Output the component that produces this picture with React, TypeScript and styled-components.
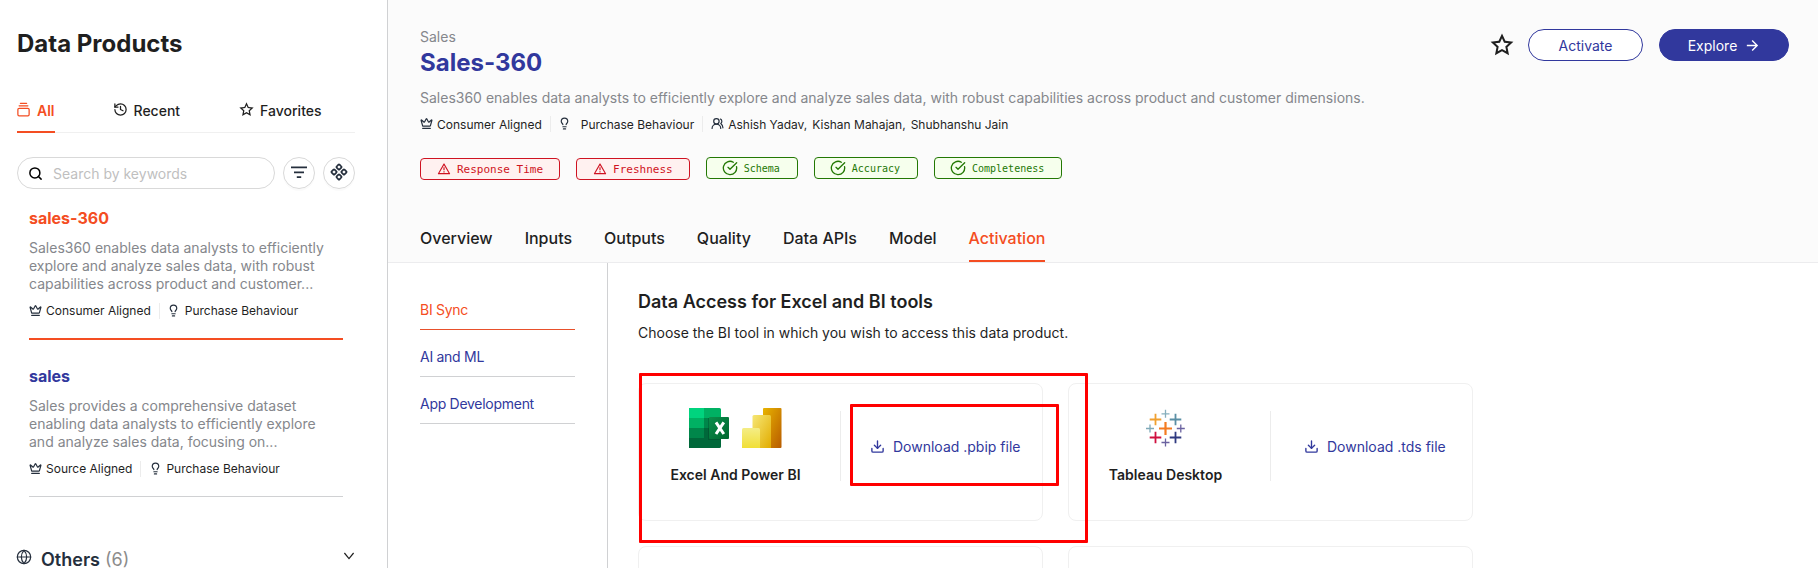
import React from "react";
import styled, { createGlobalStyle, css } from "styled-components";
import { RiAlertLine, RiStarLine, RiArrowRightLine } from "react-icons/ri";
import {
  CircleCheckBig, Component, Crown, Download, GalleryVerticalEnd,
  Globe, History, Lightbulb, Search, UsersRound,
} from "lucide-react";

const ORANGE = "#f44d22";
const BLUE = "#31389d";
const INK = "#1f1f1f";
const MUTED = "#85878c";
const RULE = "#d0d1d3";

const GlobalStyle = createGlobalStyle`
  * { box-sizing: border-box; }
  html, body { margin: 0; padding: 0; overflow: hidden; }
  body { font-family: Inter, "Liberation Sans", sans-serif; font-size: 14px; color: ${INK}; background: #fff; }
  h1, h2, h3, p { margin: 0; }
  svg { display: block; flex: none; }
`;

const Page = styled.div`
  display: flex;
  width: 1818px;
  height: 568px;
  overflow: hidden;
`;

const Sidebar = styled.aside`
  flex: none;
  width: 388px;
  border-right: 1px solid ${RULE};
  padding: 28px 32px 0 17px;
`;

const SidebarTitle = styled.h1`
  font-size: 24px;
  font-weight: 700;
  line-height: 32px;
`;

const FilterTabs = styled.nav`
  display: flex;
  gap: 59px;
  height: 43px;
  margin-top: 30px;
  border-bottom: 1px solid #f0f0f0;
`;

const FilterTab = styled.div<{ $active?: boolean }>`
  display: flex;
  gap: 6px;
  height: 43px;
  padding: 10px ${(p) => (p.$active ? 0 : 1)}px 0 0;
  font-weight: ${(p) => (p.$active ? 600 : 500)};
  line-height: 22px;
  color: ${(p) => (p.$active ? ORANGE : INK)};
  border-bottom: 2px solid ${(p) => (p.$active ? ORANGE : "transparent")};
  svg { margin: 2px 0 0 -1px; }
`;

const SearchRow = styled.div`
  display: flex;
  gap: 8px;
  margin-top: 24px;
`;

const SearchBox = styled.div`
  display: flex;
  align-items: center;
  width: 258px;
  height: 32px;
  padding-left: 10px;
  gap: 10px;
  border: 1px solid #d9d9d9;
  border-radius: 16px;
  color: #bfbfbf;
  svg { color: #000; }
`;

const RoundButton = styled.div`
  display: flex;
  align-items: center;
  justify-content: center;
  width: 32px;
  height: 32px;
  border: 1px solid #d9d9d9;
  border-radius: 50%;
  color: #252f3d;
  box-shadow: 0 2px 0 rgba(0, 0, 0, 0.02);
  svg { margin-top: -2px; }
`;

const Product = styled.article<{ $active?: boolean }>`
  margin: 0 12px;
  height: ${(p) => (p.$active ? 151 : 157)}px;
  padding-top: ${(p) => (p.$active ? 18 : 25)}px;
  border-bottom: ${(p) => (p.$active ? `2px solid ${ORANGE}` : `1px solid ${RULE}`)};
`;

const ProductName = styled.h3<{ $active?: boolean }>`
  font-size: 16px;
  font-weight: 700;
  line-height: 22px;
  color: ${(p) => (p.$active ? ORANGE : BLUE)};
`;

const ProductText = styled.p`
  margin-top: 10px;
  line-height: 18.2px;
  color: ${MUTED};
  white-space: nowrap;
`;

const MetaRow = styled.div<{ $top: number }>`
  display: flex;
  align-items: center;
  height: 16px;
  margin-top: ${(p) => p.$top}px;
  font-size: 12px;
  white-space: nowrap;
`;

const MetaItem = styled.span<{ $gap?: number }>`
  display: flex;
  align-items: center;
  gap: ${(p) => p.$gap ?? 5}px;
  svg { color: #252f3d; margin: -1px -0.5px 0; }
`;

const MetaRule = styled.span`
  width: 1px;
  height: 16px;
  margin: 0 8px;
  background: #ececec;
`;

const Others = styled.div`
  display: flex;
  align-items: center;
  height: 30px;
  margin-top: 47px;
  font-size: 18px;
  font-weight: 600;
  color: #252f3d;
`;

const OthersIcon = styled.span`
  margin: -4px 9px 0 -1px;
`;

const OthersToggle = styled.span`
  margin: -7px 0 0 auto;
`;

const Count = styled.span`
  margin-left: 5px;
  font-weight: 400;
  color: #8c8c8c;
`;

const Main = styled.main`
  flex: 1;
  display: flex;
  flex-direction: column;
  min-width: 0;
`;

const Header = styled.header`
  flex: none;
  display: flex;
  flex-direction: column;
  height: 263px;
  padding: 26px 29px 0 32px;
  background: #fbfbfb;
  border-bottom: 1px solid #ececee;
`;

const HeaderTop = styled.div`
  display: flex;
  justify-content: space-between;
`;

const Domain = styled.p`
  line-height: 22px;
  color: ${MUTED};
`;

const ProductTitle = styled.h2`
  font-size: 24px;
  font-weight: 700;
  line-height: 30px;
  color: ${BLUE};
`;

const Description = styled.p`
  margin-top: 9px;
  line-height: 22px;
  color: ${MUTED};
`;

const Actions = styled.div`
  display: flex;
  align-items: center;
  height: 32px;
  margin-top: 3px;
`;

const FavouriteIcon = styled.span`
  margin: 0 -2px 0 0;
`;

const PillButton = styled.div<{ $primary?: boolean; $width: number }>`
  display: flex;
  align-items: center;
  justify-content: center;
  gap: 7px;
  width: ${(p) => p.$width}px;
  height: 32px;
  margin-left: 16px;
  padding-left: ${(p) => (p.$primary ? 1 : 0)}px;
  border: 1px solid ${BLUE};
  border-radius: 16px;
  color: ${(p) => (p.$primary ? "#fff" : BLUE)};
  background: ${(p) => (p.$primary ? BLUE : "#fff")};
`;

const Badges = styled.div`
  display: flex;
  gap: 16px;
  margin-top: 25px;
`;

const Badge = styled.span<{ $ok?: boolean }>`
  display: flex;
  align-items: center;
  height: 22px;
  padding: 0 16px;
  border: 1px solid;
  border-radius: 4px;
  font-family: "DejaVu Sans Mono", monospace;
  ${(p) => p.$ok
    ? css`
        gap: 7px; padding-right: 17px; font-size: 10px; color: #237804; background: #f6ffed;
        svg { margin: 0 -1px; }
      `
    : css`
        gap: 7px; margin-top: 1px; font-size: 11px; color: #cf1322; background: #fff1f0;
        svg { margin-right: -1px; }
      `}
`;

const Tabs = styled.nav`
  display: flex;
  gap: 32px;
  margin-top: auto;
`;

const Tab = styled.div<{ $active?: boolean }>`
  height: 36px;
  font-size: 16px;
  font-weight: 500;
  line-height: 24px;
  color: ${(p) => (p.$active ? ORANGE : INK)};
  border-bottom: 2px solid ${(p) => (p.$active ? ORANGE : "transparent")};
`;

const Body = styled.div`
  flex: 1;
  display: flex;
  min-height: 0;
`;

const SideNav = styled.nav`
  width: 220px;
  padding: 20px 32px 0;
  border-right: 1px solid ${RULE};
`;

const SideNavItem = styled.div<{ $active?: boolean }>`
  height: 47px;
  padding-top: 16px;
  line-height: 22px;
  letter-spacing: -0.28px;
  color: ${(p) => (p.$active ? ORANGE : BLUE)};
  border-bottom: 1px solid ${(p) => (p.$active ? "#e8502b" : RULE)};
`;

const Content = styled.section`
  flex: 1;
  padding: 26px 0 0 30px;
`;

const ContentTitle = styled.h3`
  font-size: 18px;
  font-weight: 600;
  line-height: 26px;
`;

const ContentText = styled.p`
  margin-top: 7px;
  line-height: 22px;
`;

const CardGrid = styled.div`
  position: relative;
  display: grid;
  grid-template-columns: 405px 405px;
  grid-auto-rows: 138px;
  gap: 25px;
  margin-top: 39px;
`;

const Card = styled.div`
  display: flex;
  padding: 24px 0 0;
  border: 1px solid #f0f0f0;
  border-radius: 8px;
`;

const Tool = styled.div`
  display: flex;
  flex-direction: column;
  align-items: center;
  width: 193px;
`;

const Logos = styled.div`
  display: flex;
  gap: 12px;
  height: 40px;
`;

const ToolName = styled.div`
  margin-top: 16px;
  line-height: 22px;
  font-weight: 600;
`;

const DownloadCell = styled.div<{ $left: number }>`
  display: flex;
  align-items: center;
  gap: 8px;
  height: 70px;
  margin-top: 3px;
  padding-left: ${(p) => p.$left}px;
  margin-left: 8px;
  border-left: 1px solid #ececec;
  color: ${BLUE};
`;

const Highlight = styled.div<{ $x: number; $y: number; $w: number; $h: number }>`
  position: absolute;
  left: ${(p) => p.$x}px;
  top: ${(p) => p.$y}px;
  width: ${(p) => p.$w}px;
  height: ${(p) => p.$h}px;
  border: 3px solid #f00;
  border-radius: 1px;
`;

const FilterIcon = () => (
  <svg width="16" height="16" viewBox="0 0 16 16" stroke="#252f3d" strokeWidth="1.7">
    <path d="M0 3.300h16M3 8.300h10M5.800 13.200h4.400" />
  </svg>
);

const Chevron = () => (
  <svg width="12" height="12" viewBox="0 0 12 12" fill="none" stroke="#1f1f1f" strokeWidth="1.2">
    <path d="M1.400 3 6 8.600 10.600 3" />
  </svg>
);

const ExcelLogo = () => (
  <svg width="41" height="40" viewBox="0 0 41 40">
    <defs>
      <linearGradient id="xl" x1="0" y1="0" x2="1" y2="1">
        <stop offset="0" stopColor="#0a8f4b" /><stop offset="1" stopColor="#00662f" />
      </linearGradient>
    </defs>
    <path fill="#00d47e" d="M0 0h15v10H0z" />
    <path fill="#00b163" d="M15 0h15.500q1.500 0 1.500 1.500V10H15zM0 10h15v10H0z" />
    <path fill="#00864a" d="M15 10h17v10H15zM0 20h15v10H0z" />
    <path fill="#00683a" d="M15 20h17v18.500q0 1.500-1.500 1.500H0V30h15z" />
    <rect x="19" y="10" width="13" height="22" fill="#003d20" opacity=".3" />
    <rect x="20" y="9" width="20" height="22" rx="1" fill="url(#xl)" />
    <path d="M27 14.300 34.800 26M34.800 14.300 27 26" stroke="#fff" strokeWidth="3" fill="none" />
  </svg>
);

const PowerBiLogo = () => (
  <svg width="40" height="40" viewBox="0 0 40 40">
    <defs>
      <linearGradient id="pa" x1="0" y1="0" x2="1" y2="1">
        <stop offset="0" stopColor="#e8b400" /><stop offset="1" stopColor="#b85b00" />
      </linearGradient>
      <linearGradient id="pb" x1="0" y1="0" x2="1" y2="1">
        <stop offset="0" stopColor="#f6e775" /><stop offset="1" stopColor="#e2ac00" />
      </linearGradient>
      <linearGradient id="pc" x1="0" y1="0" x2="0" y2="1">
        <stop offset="0" stopColor="#f4ed86" /><stop offset="1" stopColor="#f1df36" />
      </linearGradient>
    </defs>
    <rect x="21" width="18.500" height="40" rx="1" fill="url(#pa)" />
    <path d="M10.500 40V8.500Q10.500 7 12 7H27.500q1.500 0 1.500 1.500V40z" fill="url(#pb)" />
    <path d="M0 40V21.500Q0 20 1.500 20H16.500q1.500 0 1.500 1.500V40z" fill="url(#pc)" />
  </svg>
);

/* x, y, arm length, colour, stroke width */
const crosses: [number, number, number, string, number][] = [
  [19.5, 20.5, 6.5, "#f47b20", 2.2],
  [9.5, 11.5, 5.8, "#f0a030", 1.8],
  [29.5, 11.5, 5.8, "#5b8fa5", 1.8],
  [9.5, 29.5, 5.8, "#d0103f", 1.8],
  [29.5, 29.5, 5.8, "#2f3a80", 1.8],
  [19.5, 5.8, 4, "#86afbd", 1.3],
  [4, 20.5, 4, "#7fa9b8", 1.3],
  [34.8, 20.5, 4, "#6a62a0", 1.3],
  [19.5, 34.5, 4, "#6a62a0", 1.3],
];

const TableauLogo = () => (
  <svg width="40" height="40" viewBox="0 0 40 40">
    {crosses.map(([x, y, r, c, w], i) => (
      <path key={i} d={`M${x - r} ${y}h${2 * r}M${x} ${y - r}v${2 * r}`} stroke={c} strokeWidth={w} />
    ))}
  </svg>
);

const tabs = ["Overview", "Inputs", "Outputs", "Quality", "Data APIs", "Model", "Activation"];

export default function App() {
  return (
    <Page>
      <GlobalStyle />
      <Sidebar>
        <SidebarTitle>Data Products</SidebarTitle>
        <FilterTabs>
          <FilterTab $active><GalleryVerticalEnd size={15} />All</FilterTab>
          <FilterTab><History size={15} />Recent</FilterTab>
          <FilterTab><RiStarLine size={15} />Favorites</FilterTab>
        </FilterTabs>
        <SearchRow>
          <SearchBox><Search size={15} strokeWidth={2.4} />Search by keywords</SearchBox>
          <RoundButton><FilterIcon /></RoundButton>
          <RoundButton><Component size={18} strokeWidth={2.3} /></RoundButton>
        </SearchRow>
        <Product $active>
          <ProductName $active>sales-360</ProductName>
          <ProductText>
            Sales360 enables data analysts to efficiently<br />
            explore and analyze sales data, with robust<br />
            capabilities across product and customer...
          </ProductText>
          <MetaRow $top={9}>
            <MetaItem><Crown size={13} strokeWidth={2.2} />Consumer Aligned</MetaItem>
            <MetaRule />
            <MetaItem><Lightbulb size={13} strokeWidth={2.2} />Purchase Behaviour</MetaItem>
          </MetaRow>
        </Product>
        <Product>
          <ProductName>sales</ProductName>
          <ProductText>
            Sales provides a comprehensive dataset<br />
            enabling data analysts to efficiently explore<br />
            and analyze sales data, focusing on...
          </ProductText>
          <MetaRow $top={9}>
            <MetaItem><Crown size={13} strokeWidth={2.2} />Source Aligned</MetaItem>
            <MetaRule />
            <MetaItem><Lightbulb size={13} strokeWidth={2.2} />Purchase Behaviour</MetaItem>
          </MetaRow>
        </Product>
        <Others>
          <OthersIcon><Globe size={16} strokeWidth={1.8} /></OthersIcon>
          Others<Count>(6)</Count>
          <OthersToggle><Chevron /></OthersToggle>
        </Others>
      </Sidebar>
      <Main>
        <Header>
          <HeaderTop>
            <div>
              <Domain>Sales</Domain>
              <ProductTitle>Sales-360</ProductTitle>
              <Description>
                Sales360 enables data analysts to efficiently explore and analyze sales data, with robust capabilities across product and customer dimensions.
              </Description>
            </div>
            <Actions>
              <FavouriteIcon><RiStarLine size={24} /></FavouriteIcon>
              <PillButton $width={115}>Activate</PillButton>
              <PillButton $width={130} $primary>Explore<RiArrowRightLine size={17} /></PillButton>
            </Actions>
          </HeaderTop>
          <MetaRow $top={7}>
            <MetaItem><Crown size={13} strokeWidth={2.2} />Consumer Aligned</MetaItem>
            <MetaRule />
            <MetaItem $gap={10}><Lightbulb size={13} strokeWidth={2.2} />Purchase Behaviour</MetaItem>
            <MetaRule />
            <MetaItem><UsersRound size={13} strokeWidth={2.2} /><span>Ashish Yadav,</span><span>Kishan Mahajan,</span><span>Shubhanshu Jain</span></MetaItem>
          </MetaRow>
          <Badges>
            <Badge><RiAlertLine size={14} />Response Time</Badge>
            <Badge><RiAlertLine size={14} />Freshness</Badge>
            <Badge $ok><CircleCheckBig size={16} />Schema</Badge>
            <Badge $ok><CircleCheckBig size={16} />Accuracy</Badge>
            <Badge $ok><CircleCheckBig size={16} />Completeness</Badge>
          </Badges>
          <Tabs>
            {tabs.map((t) => <Tab key={t} $active={t === "Activation"}>{t}</Tab>)}
          </Tabs>
        </Header>
        <Body>
          <SideNav>
            <SideNavItem $active>BI Sync</SideNavItem>
            <SideNavItem>AI and ML</SideNavItem>
            <SideNavItem>App Development</SideNavItem>
          </SideNav>
          <Content>
            <ContentTitle>Data Access for Excel and BI tools</ContentTitle>
            <ContentText>Choose the BI tool in which you wish to access this data product.</ContentText>
            <CardGrid>
              <Card>
                <Tool>
                  <Logos><ExcelLogo /><PowerBiLogo /></Logos>
                  <ToolName>Excel And Power BI</ToolName>
                </Tool>
                <DownloadCell $left={29}><Download size={15} strokeWidth={2.2} />Download .pbip file</DownloadCell>
              </Card>
              <Card>
                <Tool>
                  <Logos><TableauLogo /></Logos>
                  <ToolName>Tableau Desktop</ToolName>
                </Tool>
                <DownloadCell $left={33}><Download size={15} strokeWidth={2.2} />Download .tds file</DownloadCell>
              </Card>
              <Card />
              <Card />
              <Highlight $x={1} $y={-10} $w={449} $h={170} />
              <Highlight $x={212} $y={21} $w={209} $h={82} />
            </CardGrid>
          </Content>
        </Body>
      </Main>
    </Page>
  );
}
